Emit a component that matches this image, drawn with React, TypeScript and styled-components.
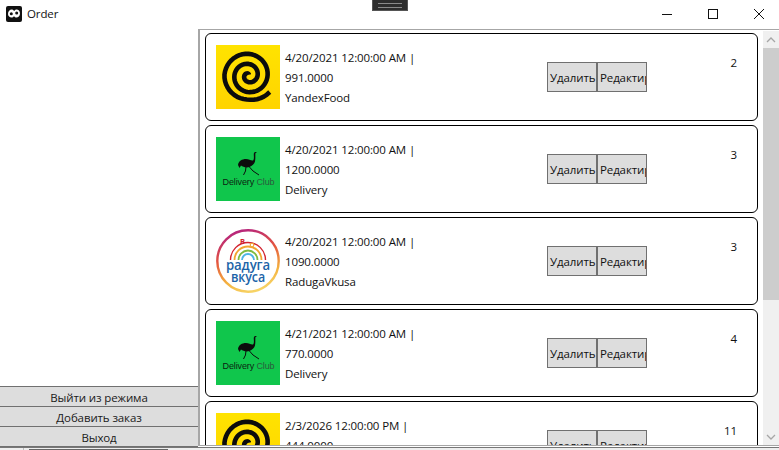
import React from "react";
import styled, { createGlobalStyle } from "styled-components";

const Global = createGlobalStyle`
  html, body { margin: 0; padding: 0; background: #fff; overflow: hidden; }
  #root { width: 779px; height: 450px; }
`;

const Win = styled.div`
  position: relative;
  width: 779px;
  height: 450px;
  display: flex;
  flex-direction: column;
  background: #fff;
  color: #111;
  font-family: "Open Sans", "Noto Sans", sans-serif;
  font-size: 11.5px;
  letter-spacing: -0.12px;
  overflow: hidden;
`;
const TitleBar = styled.div`
  flex: 0 0 29px;
  height: 29px;
  display: flex;
  align-items: center;
  padding: 0 0 2px 6px;
  gap: 5px;
  box-sizing: border-box;
`;
const TitleText = styled.span`
  flex: 1;
  line-height: 16px;
`;
const WinButtons = styled.div`
  display: flex;
  align-items: center;
  height: 100%;
  margin-right: -3px;
`;
const WinButton = styled.div`
  width: 46px;
  height: 27px;
  display: flex;
  align-items: center;
  justify-content: center;
`;
const Handle = styled.div`
  position: absolute;
  left: 372px;
  top: 0;
  width: 36px;
  height: 11px;
  box-sizing: border-box;
  background: #2d2d2d;
  border: 1px solid #555;
  border-top: none;
  display: flex;
  align-items: center;
  justify-content: center;
`;
const HandleGrip = styled.div`
  width: 24px;
  height: 3px;
  border-top: 1px solid #8a8a8a;
  border-bottom: 1px solid #8a8a8a;
`;
const Body = styled.div`
  flex: 0 0 418px;
  height: 418px;
  display: flex;
  min-height: 0;
`;
const Side = styled.div`
  width: 198px;
  flex: none;
  display: flex;
  flex-direction: column;
  justify-content: flex-end;
`;
const SideButton = styled.div`
  height: 20px;
  box-sizing: border-box;
  background: #dddddd;
  border-top: 1px solid #707070;
  display: flex;
  align-items: center;
  justify-content: center;
  line-height: 18px;
  padding-top: 2px;
  color: #1a1a1a;
  &:last-child { border-bottom: 1px solid #707070; height: 21px; }
`;
const ListPanel = styled.div`
  flex: 1;
  display: flex;
  min-width: 0;
  height: 415px;
  border-top: 1px solid #a6a6a6;
  border-left: 2px solid #a6a6a6;
  border-bottom: 1px solid #a6a6a6;
  box-sizing: content-box;
  margin-bottom: -2px;
`;
const List = styled.div`
  flex: 1;
  min-width: 0;
  overflow: hidden;
  padding: 3px 5px 0 5px;
  display: flex;
  flex-direction: column;
  gap: 4px;
`;
const Card = styled.div`
  flex: 0 0 88px;
  box-sizing: border-box;
  height: 88px;
  border: 1.4px solid #000;
  border-radius: 6px;
  padding: 11px 20px 0 10px;
  display: grid;
  grid-template-columns: 64px 267px 100px 1fr;
  align-items: start;
`;
const Logo = styled.div`
  width: 64px;
  height: 64px;
  & > svg { display: block; }
`;
const Info = styled.div`
  margin: 3px 0 0 5px;
  display: flex;
  flex-direction: column;
`;
const InfoLine = styled.div`
  height: 20px;
  line-height: 20px;
  white-space: nowrap;
  color: #111;
`;
const Actions = styled.div`
  display: flex;
  margin-top: 17px;
`;
const ActionButton = styled.div`
  width: 50px;
  height: 30px;
  box-sizing: border-box;
  border: 1px solid #707070;
  background: #dddddd;
  line-height: 30px;
  white-space: nowrap;
  overflow: hidden;
  padding-left: 2px;
  color: #111;
`;
const Count = styled.div`
  margin-top: 8px;
  text-align: right;
  line-height: 20px;
`;
const ScrollBar = styled.div`
  flex: 0 0 16px;
  width: 16px;
  margin-top: 1px;
  background: #f0f0f0;
  display: flex;
  flex-direction: column;
`;
const ScrollArrow = styled.div`
  flex: 0 0 17px;
  display: flex;
  align-items: center;
  justify-content: center;
`;
const ScrollThumb = styled.div`
  flex: 0 0 252px;
  background: #cdcdcd;
`;
const ScrollRest = styled.div`
  flex: 1;
`;
const BottomBar = styled.div`
  flex: 1;
  background: #eeeeee;
  display: flex;
  border-top: 1px solid #777;
  box-sizing: border-box;
`;
const Divider = styled.div`
  margin-left: 23px;
  width: 1px;
  background: #bdbdbd;
`;
const BottomTab = styled.div`
  margin-left: 5px;
  width: 139px;
  border-top: 1px solid #666;
  margin-top: 1px;
`;

function spiralPath(cx: number, cy: number): string {
  const pts: string[] = [];
  for (let deg = 38; deg <= 1020; deg += 8) {
    const t = (deg * Math.PI) / 180;
    let r = 21.6 - (10 * (deg - 270)) / 360;
    if (deg < 180) r = 24.1 + (deg < 90 ? (90 - deg) * 0.055 : 0);
    if (r < 0.5) r = 0.5;
    pts.push(`${(cx + r * Math.cos(t)).toFixed(2)} ${(cy + r * Math.sin(t)).toFixed(2)}`);
  }
  return "M" + pts.join("L");
}

const YandexLogo = () => (
  <svg width="64" height="64" viewBox="0 0 64 64">
    <defs>
      <linearGradient id="yf" x1="0" y1="0" x2="0" y2="1">
        <stop offset="0" stopColor="#ffe300" />
        <stop offset="1" stopColor="#ffd400" />
      </linearGradient>
    </defs>
    <rect width="64" height="64" fill="url(#yf)" />
    <path d={spiralPath(32.5, 30.5)} fill="none" stroke="#0c0c0c" strokeWidth="4.6" strokeLinecap="butt" strokeLinejoin="round" />
  </svg>
);

const DeliveryLogo = () => (
  <svg width="64" height="64" viewBox="0 0 64 64">
    <rect width="64" height="64" fill="#10c64c" />
    <path
      d="M22 28C22.500 24 26 22 30 22C33 22 35 24 37 23.500C38 23 38 20 37.800 18C37.700 16.500 38 15 39.500 15L41 15.600L39.400 16.200C39.200 18 39.600 21 39 24.500C38.400 27 36 29 33.500 30C30 31 27 30 25 28.500L23.500 31Z"
      fill="#0c0c0c"
    />
    <path d="M30 29.500L29.500 34L27.500 38M33 29.500L37 34L43 38" fill="none" stroke="#0c0c0c" strokeWidth="1" />
    <text x="32.500" y="47.500" textAnchor="middle" fontFamily="'Liberation Sans', sans-serif" fontSize="9" fill="#0c1f12">
      Delivery <tspan fill="#2d5a3c">Club</tspan>
    </text>
  </svg>
);

const RadugaLogo = () => (
  <svg width="64" height="64" viewBox="0 0 64 64">
    <defs>
      <linearGradient id="rg" x1="0.3" y1="0" x2="0.6" y2="1">
        <stop offset="0" stopColor="#b4237f" />
        <stop offset="0.4" stopColor="#e4553f" />
        <stop offset="0.75" stopColor="#f4b13f" />
        <stop offset="1" stopColor="#f7d466" />
      </linearGradient>
    </defs>
    <circle cx="32" cy="32" r="30.700" fill="#fff" stroke="url(#rg)" strokeWidth="2.400" />
    <path d="M14.500 31a17.500 17.500 0 0 1 35 0" fill="none" stroke="#d2232f" strokeWidth="1.400" />
    <path d="M18.500 31a13.500 13.500 0 0 1 27 0" fill="none" stroke="#f2a530" strokeWidth="1.800" />
    <path d="M22.500 31a9.500 9.500 0 0 1 19 0" fill="none" stroke="#7dbb42" strokeWidth="1.800" />
    <path d="M26 31a6 6 0 0 1 12 0" fill="none" stroke="#4db4e6" strokeWidth="1.800" />
    <text x="26.500" y="14.500" textAnchor="middle" fontFamily="'Open Sans', sans-serif" fontWeight="700" fontSize="8" fill="#d2232f">в</text>
    <circle cx="36" cy="16" r="1.800" fill="#fff" stroke="#f2a530" strokeWidth="1.100" />
    <text x="32" y="41" textAnchor="middle" fontFamily="'Open Sans', sans-serif" fontWeight="600" fontSize="14.500" textLength="44" lengthAdjust="spacingAndGlyphs" fill="#1c64a8">
      радуга
    </text>
    <text x="32" y="53" textAnchor="middle" fontFamily="'Open Sans', sans-serif" fontWeight="600" fontSize="14" textLength="34" lengthAdjust="spacingAndGlyphs" fill="#1c64a8">
      вкуса
    </text>
  </svg>
);

const AppIcon = () => (
  <svg width="16" height="16" viewBox="0 0 16 16">
    <rect width="16" height="16" rx="2" fill="#111" />
    <path
      d="M2 8C2 5 4 3.500 5.500 3.500c1.300 0 2 .7 2.700 1.500C8.800 4.200 9.500 3.500 10.700 3.500 12.300 3.500 14 5 14 7.500c0 2.500-1.900 4-3.500 4-1 0-1.800-.5-2.500-1.300C7.300 11 6.500 11.500 5.500 11.500 3.800 11.500 2 10.200 2 8z"
      fill="#fff"
    />
    <circle cx="5.300" cy="7.800" r="1.500" fill="#111" />
    <circle cx="10.700" cy="7" r="1.500" fill="#111" />
  </svg>
);

type Order = { date: string; price: string; name: string; count: number; logo: React.ReactNode };

const orders: Order[] = [
  { date: "4/20/2021 12:00:00 AM |", price: "991.0000", name: "YandexFood", count: 2, logo: <YandexLogo /> },
  { date: "4/20/2021 12:00:00 AM |", price: "1200.0000", name: "Delivery", count: 3, logo: <DeliveryLogo /> },
  { date: "4/20/2021 12:00:00 AM |", price: "1090.0000", name: "RadugaVkusa", count: 3, logo: <RadugaLogo /> },
  { date: "4/21/2021 12:00:00 AM |", price: "770.0000", name: "Delivery", count: 4, logo: <DeliveryLogo /> },
  { date: "2/3/2026 12:00:00 PM |", price: "444.0000", name: "YandexFood", count: 11, logo: <YandexLogo /> },
];

export default function App() {
  return (
    <Win>
      <Global />
      <TitleBar>
        <AppIcon />
        <TitleText>Order</TitleText>
        <WinButtons>
          <WinButton>
            <svg width="10" height="10" viewBox="0 0 10 10"><path d="M0 5.500h10" stroke="#111" strokeWidth="1" /></svg>
          </WinButton>
          <WinButton>
            <svg width="10" height="10" viewBox="0 0 10 10"><rect x=".5" y=".5" width="9" height="9" fill="none" stroke="#111" strokeWidth="1" /></svg>
          </WinButton>
          <WinButton>
            <svg width="10" height="10" viewBox="0 0 10 10"><path d="M0 0l10 10M10 0L0 10" stroke="#111" strokeWidth="1" /></svg>
          </WinButton>
        </WinButtons>
      </TitleBar>
      <Handle><HandleGrip /></Handle>
      <Body>
        <Side>
          <SideButton>Выйти из режима</SideButton>
          <SideButton>Добавить заказ</SideButton>
          <SideButton>Выход</SideButton>
        </Side>
        <ListPanel>
          <List>
            {orders.map((o, i) => (
              <Card key={i}>
                <Logo>{o.logo}</Logo>
                <Info>
                  <InfoLine>{o.date}</InfoLine>
                  <InfoLine>{o.price}</InfoLine>
                  <InfoLine>{o.name}</InfoLine>
                </Info>
                <Actions>
                  <ActionButton>Удалить</ActionButton>
                  <ActionButton>Редактировать</ActionButton>
                </Actions>
                <Count>{o.count}</Count>
              </Card>
            ))}
          </List>
          <ScrollBar>
            <ScrollArrow>
              <svg width="10" height="6" viewBox="0 0 10 6"><path d="M1 5l4-4 4 4" fill="none" stroke="#a6a6a6" strokeWidth="1.300" /></svg>
            </ScrollArrow>
            <ScrollThumb />
            <ScrollRest />
            <ScrollArrow>
              <svg width="10" height="6" viewBox="0 0 10 6"><path d="M1 1l4 4 4-4" fill="none" stroke="#a6a6a6" strokeWidth="1.300" /></svg>
            </ScrollArrow>
          </ScrollBar>
        </ListPanel>
      </Body>
      <BottomBar>
        <Divider />
        <BottomTab />
      </BottomBar>
    </Win>
  );
}
